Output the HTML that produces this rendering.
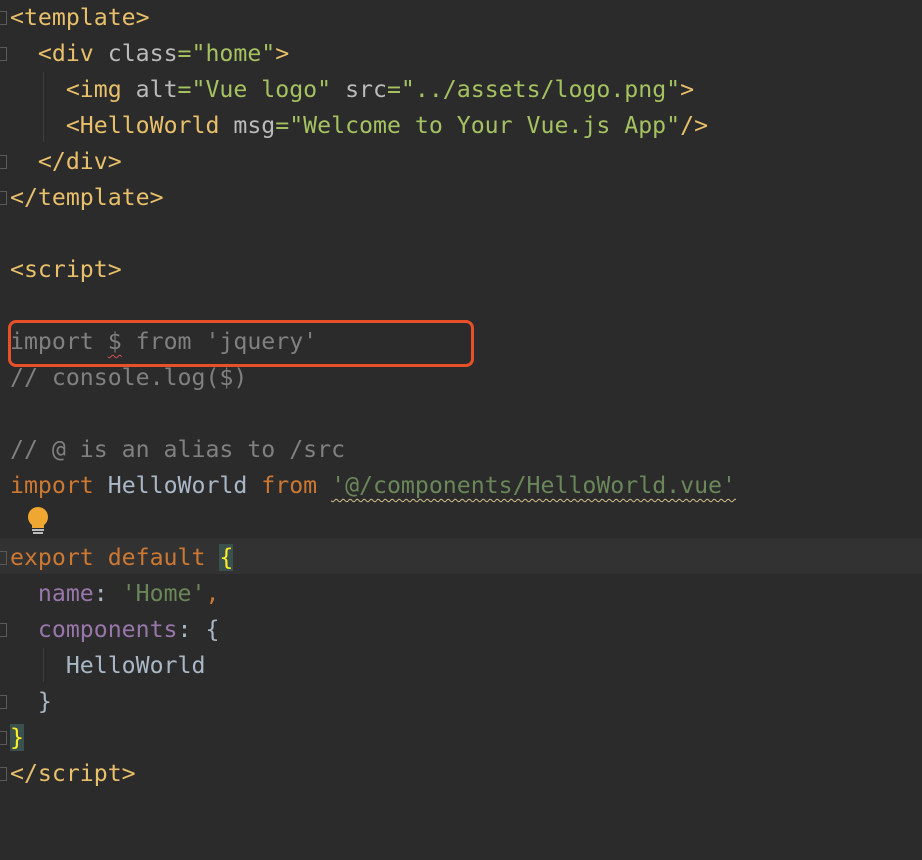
<!DOCTYPE html>
<html><head><meta charset="utf-8"><style>
html,body{margin:0;padding:0;background:#2b2b2b;width:922px;height:860px;overflow:hidden}
.ed{position:absolute;left:0;top:0;width:922px;height:860px;font-family:"DejaVu Sans Mono","Liberation Mono",monospace;font-size:23.2px}
.l{position:absolute;left:10px;height:36px;line-height:36px;white-space:pre;color:#a9b7c6}
.t{color:#e8bf6a}.a{color:#bababa}.v{color:#a5c261}.c{color:#808080}.k{color:#cc7832}.s{color:#6a8759}.p{color:#9876aa}.y{color:#ffef28;background:#3b514d}
.cur{position:absolute;left:0;top:538px;width:922px;height:36px;background:#323232}
.g{position:absolute;width:1px;background:#3d3d3d}
.f{position:absolute;left:0;width:7px;height:14px;border:1px solid #5a5a5a;border-left:none;box-sizing:border-box}
.box{position:absolute;left:8px;top:320px;width:466px;height:47px;border:3px solid #e8502a;border-radius:8px;box-sizing:border-box}
.sq{text-decoration:underline wavy #d3c28b;text-decoration-thickness:1px;text-underline-offset:5px}
.rd{text-decoration:underline wavy #d25252;text-decoration-thickness:1px;text-underline-offset:5px}
</style></head><body><div class="ed">
<div class="cur"></div>
<div class="g" style="left:43px;top:72px;height:70px"></div>
<div class="g" style="left:43px;top:648px;height:34px"></div>
<div class="f" style="top:11px"></div><div class="f" style="top:47px"></div><div class="f" style="top:155px"></div><div class="f" style="top:191px"></div>
<div class="f" style="top:551px"></div><div class="f" style="top:623px"></div><div class="f" style="top:695px"></div><div class="f" style="top:731px"></div><div class="f" style="top:767px"></div>
<div class="l" style="top:0"><span class="t">&lt;template&gt;</span></div>
<div class="l" style="top:36px">  <span class="t">&lt;div </span><span class="a">class</span><span class="v">="home"</span><span class="t">&gt;</span></div>
<div class="l" style="top:72px">    <span class="t">&lt;img </span><span class="a">alt</span><span class="v">="Vue logo" </span><span class="a">src</span><span class="v">="../assets/logo.png"</span><span class="t">&gt;</span></div>
<div class="l" style="top:108px">    <span class="t">&lt;HelloWorld </span><span class="a">msg</span><span class="v">="Welcome to Your Vue.js App"</span><span class="t">/&gt;</span></div>
<div class="l" style="top:144px">  <span class="t">&lt;/div&gt;</span></div>
<div class="l" style="top:180px"><span class="t">&lt;/template&gt;</span></div>
<div class="l" style="top:252px"><span class="t">&lt;script&gt;</span></div>
<div class="l c" style="top:324px">import <span class="rd">$</span> from 'jquery'</div>
<div class="l c" style="top:360px">// console.log($)</div>
<div class="l c" style="top:432px">// @ is an alias to /src</div>
<div class="l" style="top:468px"><span class="k">import </span>HelloWorld <span class="k">from </span><span class="s sq">'@/components/HelloWorld.vue'</span></div>
<svg style="position:absolute;left:26px;top:506px" width="24" height="30" viewBox="0 0 24 30"><circle cx="12" cy="11" r="10" fill="#f0a732"/><rect x="6" y="14" width="12" height="8" fill="#f0a732"/><rect x="6" y="23" width="12" height="2" fill="#bbb"/><rect x="7" y="26" width="10" height="2" fill="#bbb"/></svg>
<div class="l" style="top:540px"><span class="k">export default </span><span class="y">{</span></div>
<div class="l" style="top:576px">  <span class="p">name</span>: <span class="s">'Home'</span><span class="k">,</span></div>
<div class="l" style="top:612px">  <span class="p">components</span>: {</div>
<div class="l" style="top:648px">    HelloWorld</div>
<div class="l" style="top:684px">  }</div>
<div class="l" style="top:720px"><span class="y">}</span></div>
<div class="l" style="top:756px"><span class="t">&lt;/script&gt;</span></div>
<div class="box"></div>
</div></body></html>
